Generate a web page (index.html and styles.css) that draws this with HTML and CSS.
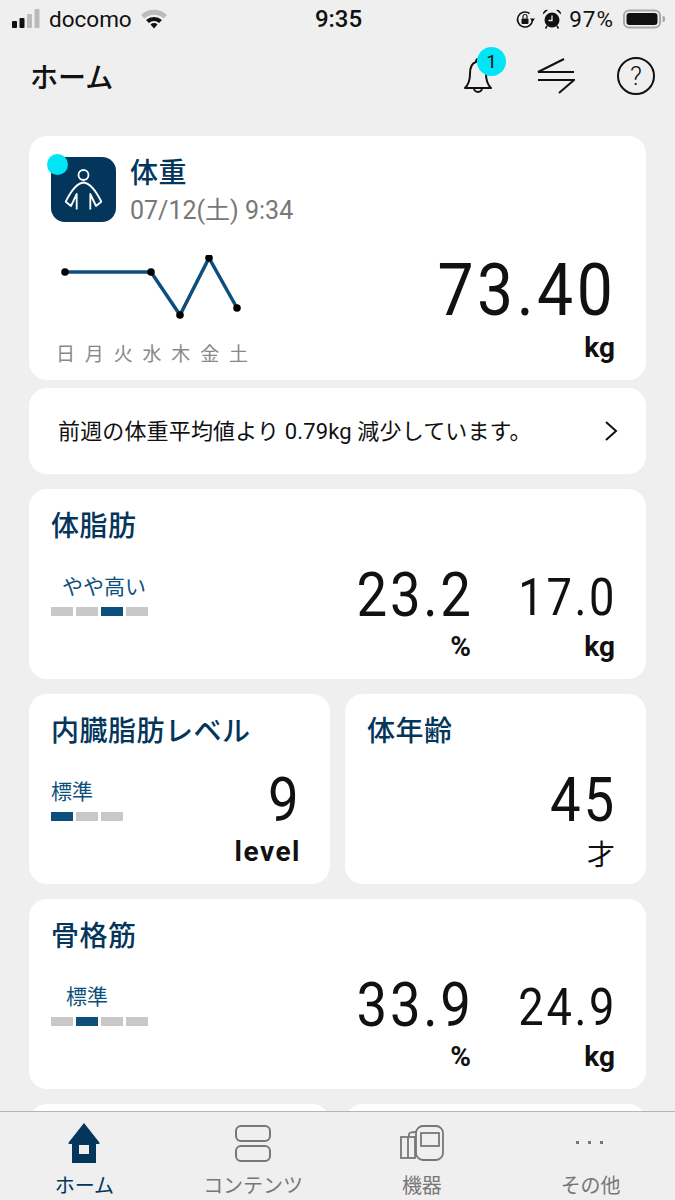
FILE: index.html
```html
<!DOCTYPE html>
<html lang="ja">

<head>
    <meta charset="UTF-8">
    <meta name="viewport" content="width=device-width, initial-scale=1.0">
    <title>ホーム</title>
    <link rel="stylesheet" href="styles.css">
</head>

<body>
    <div class="app">
        <div class="status-bar">
            <div class="status-left">
                <svg width="30" height="20" viewBox="0 0 30 20">
                    <rect x="0" y="12" width="5" height="7" rx="1" fill="#111" />
                    <rect x="7.500" y="9" width="5" height="10" rx="1" fill="#111" />
                    <rect x="15" y="5" width="5" height="14" rx="1" fill="#bbb" />
                    <rect x="22.500" y="0" width="5" height="19" rx="1" fill="#bbb" />
                </svg>
                <span>docomo</span>
                <svg class="wifi" width="26" height="20" viewBox="0 0 26 20">
                    <path d="M0 6 A19 19 0 0 1 26 6 L22.500 9.500 A14 14 0 0 0 3.500 9.500 Z" fill="#bbb" />
                    <path d="M5 11 A12 12 0 0 1 21 11 L18 14 A7.500 7.500 0 0 0 8 14 Z" fill="#111" />
                    <path d="M9.500 15.500 A5 5 0 0 1 16.500 15.500 L13 19.500 Z" fill="#111" />
                </svg>
            </div>
            <div class="status-time">9:35</div>
            <div class="status-right">
                <svg width="20" height="20" viewBox="0 0 20 20">
                    <path d="M17.500 11 A7.500 7.500 0 1 1 14.500 4.500" fill="none" stroke="#111" stroke-width="1.600" />
                    <path d="M15 9.500 H20 L17.500 13 Z" fill="#111" />
                    <rect x="6.500" y="9.500" width="7" height="5.500" rx="1" fill="#111" />
                    <path d="M8 9.500 V7.500 A2 2 0 0 1 12 7.500 V9.500" fill="none" stroke="#111" stroke-width="1.200" />
                </svg>
                <svg width="20" height="20" viewBox="0 0 20 20">
                    <circle cx="10" cy="11" r="7.500" fill="#111" />
                    <path d="M1 5.500 A4 4 0 0 1 6 1 Z M19 5.500 A4 4 0 0 0 14 1 Z" fill="#111" />
                    <path d="M10 6.500 V11.500 H6.500" fill="none" stroke="#eee" stroke-width="1.300" />
                    <path d="M5 17 L3.500 19.500 M15 17 L16.500 19.500" stroke="#111" stroke-width="1.500" />
                </svg>
                <span class="battery-text">97%</span>
                <svg class="battery" width="42" height="20" viewBox="0 0 42 20">
                    <rect x="1" y="1.500" width="36" height="17" rx="5" fill="none" stroke="#aaa" stroke-width="2" />
                    <rect x="3.500" y="4" width="31" height="12" rx="3" fill="#111" />
                    <path d="M39.500 7 A3 3 0 0 1 39.500 13 Z" fill="#aaa" />
                </svg>
            </div>
        </div>

        <div class="top-bar">
            <h1 class="page-title">ホーム</h1>
            <div class="top-icons">
                <div class="bell-wrap">
                    <svg width="34" height="42" viewBox="0 0 34 42">
                        <path d="M4 33 C8 29 9 24 9 19 C9 12 11 8 15 7 C15 3 19 3 19 7 C23 8 25 12 25 19 C25 24 26 29 30 33 Z" fill="none" stroke="#111" stroke-width="2" stroke-linejoin="round" />
                        <path d="M13 33 A4 4 0 0 0 21 33" fill="none" stroke="#111" stroke-width="2" />
                    </svg>
                    <span class="bell-badge">1</span>
                </div>
                <svg width="38" height="36" viewBox="0 0 38 36">
                    <path d="M27 1 L1 14 H37" fill="none" stroke="#111" stroke-width="2" />
                    <path d="M1 22 H37 L22 35" fill="none" stroke="#111" stroke-width="2" />
                </svg>
                <div class="help-icon">?</div>
            </div>
        </div>

        <div class="content">
            <div class="card card-weight">
                <div class="weight-head">
                    <div class="weight-icon">
                        <svg width="65" height="65" viewBox="0 0 65 65">
                            <circle cx="32.500" cy="18" r="5" fill="none" stroke="#fff" stroke-width="1.800" />
                            <path d="M25.700 52.500 V37 L20 49 L14.700 44.700 C20 34 26 26 32.500 25.500 C39 26 45 34 50.300 44.700 L45 49 L39.300 37 V52.500" fill="none" stroke="#fff" stroke-width="1.800" stroke-linejoin="round" />
                        </svg>
                        <span class="weight-dot"></span>
                    </div>
                    <div>
                        <div class="card-title">体重</div>
                        <div class="weight-date">07/12(土) 9:34</div>
                    </div>
                </div>
                <div class="weight-body">
                    <div class="weight-chart">
                        <svg width="200" height="76" viewBox="0 0 200 76">
                            <polyline points="6,17 92,17 121,60 150,3 178,53" fill="none" stroke="#0d4f7c" stroke-width="3.500" />
                            <circle cx="6" cy="17" r="3.800" />
                            <circle cx="92" cy="17" r="3.800" />
                            <circle cx="121" cy="60" r="3.800" />
                            <circle cx="150" cy="3" r="3.800" />
                            <circle cx="178" cy="53" r="3.800" />
                        </svg>
                        <div class="days">
                            <span>日</span><span>月</span><span>火</span><span>水</span><span>木</span><span>金</span><span>土</span>
                        </div>
                    </div>
                    <div class="value-box value-weight">
                        <div class="num num-xl">73.40</div>
                        <div class="unit">kg</div>
                    </div>
                </div>
            </div>

            <div class="card card-message">
                <span>前週の体重平均値より 0.79kg 減少しています。</span>
                <svg width="14" height="22" viewBox="0 0 14 22">
                    <path d="M2 2 L12 11 L2 20" fill="none" stroke="#111" stroke-width="2" />
                </svg>
            </div>

            <div class="card card-metric">
                <div class="card-title">体脂肪</div>
                <div class="metric-row">
                    <div class="level">
                        <div class="level-label label-fat">やや高い</div>
                        <div class="level-bar"><i></i><i></i><i class="on"></i><i></i></div>
                    </div>
                    <div class="values">
                        <div class="value-box w-pct">
                            <div class="num">23.2</div>
                            <div class="unit">%</div>
                        </div>
                        <div class="value-box w-kg">
                            <div class="num num-sm">17.0</div>
                            <div class="unit">kg</div>
                        </div>
                    </div>
                </div>
            </div>

            <div class="card-pair">
                <div class="card card-metric">
                    <div class="card-title">内臓脂肪レベル</div>
                    <div class="metric-row">
                        <div class="level">
                            <div class="level-label">標準</div>
                            <div class="level-bar"><i class="on"></i><i></i><i></i></div>
                        </div>
                        <div class="value-box">
                            <div class="num">9</div>
                            <div class="unit unit-level">level</div>
                        </div>
                    </div>
                </div>
                <div class="card card-metric">
                    <div class="card-title">体年齢</div>
                    <div class="metric-row metric-end">
                        <div class="value-box">
                            <div class="num">45</div>
                            <div class="unit unit-age">才</div>
                        </div>
                    </div>
                </div>
            </div>

            <div class="card card-metric">
                <div class="card-title">骨格筋</div>
                <div class="metric-row">
                    <div class="level">
                        <div class="level-label label-muscle">標準</div>
                        <div class="level-bar"><i></i><i class="on"></i><i></i><i></i></div>
                    </div>
                    <div class="values">
                        <div class="value-box w-pct">
                            <div class="num">33.9</div>
                            <div class="unit">%</div>
                        </div>
                        <div class="value-box w-kg">
                            <div class="num num-sm">24.9</div>
                            <div class="unit">kg</div>
                        </div>
                    </div>
                </div>
            </div>

            <div class="card-pair">
                <div class="card card-metric"></div>
                <div class="card card-metric"></div>
            </div>
        </div>

        <div class="tab-bar">
            <div class="tab tab-active">
                <svg width="36" height="40" viewBox="0 0 36 40">
                    <path d="M18 0 L33 19 Q34.500 21 32 21 H30 V40 H6 V21 H4 Q1.500 21 3 19 Z M13 22 V31 H23 V22 Z" fill="#04365c" fill-rule="evenodd" />
                </svg>
                <span>ホーム</span>
            </div>
            <div class="tab">
                <svg width="36" height="40" viewBox="0 0 36 40">
                    <rect x="1" y="3" width="34" height="15" rx="5" fill="none" stroke="#777" stroke-width="2" />
                    <rect x="1" y="23" width="34" height="15" rx="5" fill="none" stroke="#777" stroke-width="2" />
                </svg>
                <span>コンテンツ</span>
            </div>
            <div class="tab">
                <svg width="46" height="40" viewBox="0 0 46 40">
                    <rect x="2" y="14" width="14" height="21" fill="none" stroke="#777" stroke-width="1.800" />
                    <path d="M9 14 V35 M10 14 V11 Q10 9 18 9" fill="none" stroke="#777" stroke-width="1.800" />
                    <rect x="17" y="3" width="27" height="34" rx="7" fill="#efefef" stroke="#777" stroke-width="1.800" />
                    <rect x="22" y="10" width="18" height="13" fill="none" stroke="#777" stroke-width="1.800" />
                </svg>
                <span>機器</span>
            </div>
            <div class="tab">
                <svg width="36" height="40" viewBox="0 0 36 40">
                    <rect x="3" y="18" width="3" height="3" fill="#777" />
                    <rect x="15" y="18" width="3" height="3" fill="#777" />
                    <rect x="27" y="18" width="3" height="3" fill="#777" />
                </svg>
                <span>その他</span>
            </div>
        </div>
    </div>
</body>

</html>
```

FILE: styles.css
```css
html,
body {
    margin: 0;
    padding: 0;
}

body {
    background-color: #efefef;
    font-family: "Roboto", "Noto Sans CJK JP", sans-serif;
    color: #111;
}

.app {
    width: 675px;
    height: 1200px;
    display: flex;
    flex-direction: column;
    overflow: hidden;
}

/* status bar */
.status-bar {
    height: 38px;
    flex: none;
    display: grid;
    grid-template-columns: 1fr auto 1fr;
    align-items: center;
    padding: 0 10px 0 12px;
    font-size: 22.5px;
}

.status-left,
.status-right {
    display: flex;
    align-items: center;
    gap: 7px;
}

.status-right {
    justify-content: flex-end;
}

.status-left .wifi {
    margin-left: 2px;
}

.status-time {
    font-weight: 500;
    font-size: 24px;
}

.battery-text {
    letter-spacing: 1px;
}

.battery {
    margin-left: 2px;
}

/* top bar */
.top-bar {
    height: 80px;
    flex: none;
    display: flex;
    align-items: center;
    justify-content: space-between;
    padding: 0 20px 4px 30px;
    box-sizing: border-box;
}

.page-title {
    margin: 0;
    font-size: 28px;
    font-weight: 500;
}

.top-icons {
    display: flex;
    align-items: center;
    gap: 42px;
}

.bell-wrap {
    position: relative;
    width: 34px;
    height: 42px;
}

.bell-badge {
    position: absolute;
    top: -8px;
    left: 16px;
    width: 29px;
    height: 29px;
    border-radius: 50%;
    background-color: #00e5f5;
    font-size: 19px;
    line-height: 29px;
    text-align: center;
}

.help-icon {
    width: 34px;
    height: 34px;
    border: 2px solid #111;
    border-radius: 50%;
    font-size: 26px;
    font-weight: 300;
    line-height: 34px;
    text-align: center;
}

/* cards */
.content {
    flex: 1;
    min-height: 0;
    overflow: hidden;
    padding: 18px 29px 0;
    display: flex;
    flex-direction: column;
    gap: 15px;
}

.card {
    background-color: #fff;
    border-radius: 18px;
    box-sizing: border-box;
    flex: none;
}

.card-title {
    font-size: 28px;
    font-weight: 500;
    letter-spacing: 0.5px;
    color: #04365c;
    line-height: 36px;
}

.card-weight {
    height: 244px;
    padding: 20px 31px 0 22px;
    margin-bottom: -7px;
}

.weight-head {
    display: flex;
    gap: 14px;
    height: 75px;
}

.weight-icon {
    width: 65px;
    height: 65px;
    margin-top: 1px;
    border-radius: 14px;
    background-color: #04365c;
    position: relative;
}

.weight-icon svg {
    display: block;
}

.weight-dot {
    position: absolute;
    top: -3px;
    left: -4px;
    width: 21px;
    height: 21px;
    border-radius: 50%;
    background-color: #00e5f5;
}

.weight-date {
    font-size: 25px;
    color: #777;
    line-height: 36px;
    padding-top: 1px;
}

.weight-body {
    display: flex;
    justify-content: space-between;
}

.weight-chart {
    width: 200px;
    margin-left: 8px;
    padding-top: 24px;
}

.weight-chart svg {
    display: block;
}

.days {
    display: flex;
    justify-content: space-between;
    width: 192px;
    margin: 8px 0 0 -3px;
    font-size: 19px;
    color: #888;
}

.card-message {
    height: 86px;
    display: flex;
    align-items: center;
    justify-content: space-between;
    padding: 0 28px 0 29px;
    font-size: 22px;
    letter-spacing: 0.15px;
}

.card-message span {
    padding-bottom: 4px;
}

.card-metric {
    height: 190px;
    padding: 20px 31px 0 22px;
}

.metric-row {
    display: flex;
    justify-content: space-between;
    margin-top: 20px;
}

.metric-end {
    justify-content: flex-end;
}

.values {
    display: flex;
}

.value-box {
    text-align: right;
}

.value-weight {
    margin-top: 21px;
}

.w-pct {
    width: 130px;
}

.w-kg {
    width: 144px;
}

/* numbers are narrower than Roboto, squeeze them from the right edge */
.num {
    font-size: 62px;
    line-height: 60px;
    letter-spacing: 3px;
    margin-right: -2px;
    transform: scaleX(0.88);
    transform-origin: right center;
}

.w-pct .num {
    margin-right: 0;
}

.num-sm {
    font-size: 52px;
    padding-top: 3px;
    margin-bottom: -3px;
    transform: scaleX(0.87);
}

.num-xl {
    font-size: 73px;
    line-height: 76px;
    letter-spacing: 4px;
    margin-right: -1px;
}

.unit {
    font-size: 28px;
    font-weight: 700;
    line-height: 36px;
    margin-top: 4px;
}

.value-weight .unit {
    margin-top: 2px;
}

.unit-level {
    letter-spacing: 1.500px;
    margin-right: -2px;
}

.unit-age {
    font-weight: 400;
    margin-top: 8px;
}

.level {
    padding-top: 7px;
}

.level-label {
    font-size: 21px;
    color: #0d4f7c;
    line-height: 30px;
}

.label-fat {
    padding-left: 11px;
}

.label-muscle {
    padding-left: 15px;
}

.level-bar {
    display: flex;
    gap: 3px;
    margin-top: 5px;
}

.level-bar i {
    display: block;
    width: 22px;
    height: 9px;
    background-color: #c8c8c8;
}

.level-bar i.on {
    background-color: #0d4f7c;
}

.card-pair {
    display: grid;
    grid-template-columns: 301px 301px;
    gap: 15px;
    flex: none;
}

/* tab bar */
.tab-bar {
    height: 89px;
    flex: none;
    display: grid;
    grid-template-columns: repeat(4, 1fr);
    background-color: #efefef;
    border-top: 1px solid #b5b5b5;
    box-sizing: border-box;
}

.tab {
    display: flex;
    flex-direction: column;
    align-items: center;
    padding-top: 11px;
    gap: 9px;
    font-size: 20px;
    color: #777;
}

.tab span {
    line-height: 28px;
}

.tab-active {
    color: #04365c;
}
```
